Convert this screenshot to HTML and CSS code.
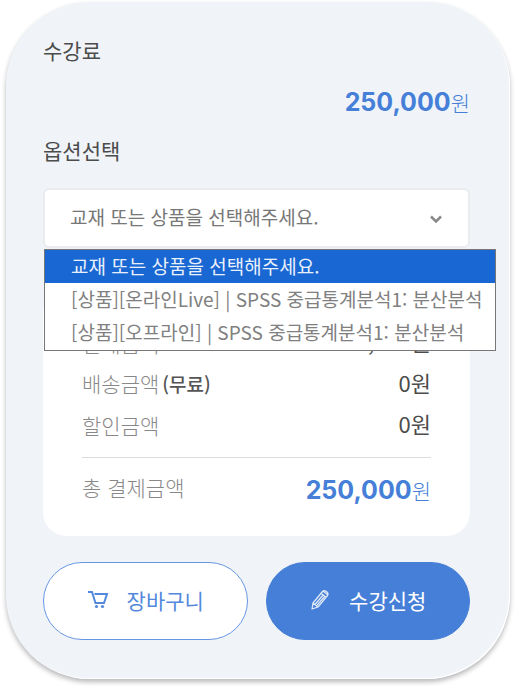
FILE: index.html
```html
<!DOCTYPE html>
<html lang="ko">
<head>
<meta charset="utf-8">
<meta name="viewport" content="width=device-width, initial-scale=1">
<title>수강료</title>
<link rel="stylesheet" href="styles.css">
</head>
<body>
<main class="card">
  <h2 class="heading">수강료</h2>
  <p class="price"><strong>250,000</strong><span>원</span></p>
  <h2 class="heading"><label for="product">옵션선택</label></h2>
  <div class="picker">
    <select id="product" class="picker-select">
      <option>교재 또는 상품을 선택해주세요.</option>
    </select>
    <svg class="picker-arrow" viewBox="0 0 14 10" aria-hidden="true"><path d="M2 2.5 7 7.5 12 2.5"/></svg>
    <ul class="menu" role="listbox">
      <li class="menu-item is-active" role="option" aria-selected="true">교재 또는 상품을 선택해주세요.</li>
      <li class="menu-item" role="option">[상품][온라인Live] | SPSS 중급통계분석1: 분산분석</li>
      <li class="menu-item" role="option">[상품][오프라인] | SPSS 중급통계분석1: 분산분석</li>
    </ul>
  </div>
  <section class="summary">
    <dl class="rows">
      <div class="row"><dt>판매금액</dt><dd>250,000원</dd></div>
      <div class="row"><dt>배송금액<b class="note">(무료)</b></dt><dd>0원</dd></div>
      <div class="row"><dt>할인금액</dt><dd>0원</dd></div>
      <div class="row total"><dt>총 결제금액</dt><dd class="price"><strong>250,000</strong><span>원</span></dd></div>
    </dl>
  </section>
  <div class="actions">
    <button type="button" class="button outline">
      <svg class="icon" viewBox="0 0 22 22" aria-hidden="true">
        <path d="M1 3h4l3.500 11h8.500L20 5H7.500" fill="none" stroke="currentColor" stroke-width="2"/>
        <circle cx="9.500" cy="17.500" r="1.600" fill="currentColor"/><circle cx="15.500" cy="17.500" r="1.600" fill="currentColor"/>
      </svg>
      장바구니
    </button>
    <button type="button" class="button filled">
      <svg class="icon" viewBox="0 0 22 22" aria-hidden="true">
        <path d="M3 20 4 14 13.500 2.500Q15 .800 17 2.200L18.500 3.500Q19.800 5 18.500 6.500L9 18ZM4 14l5 4M12 4.300l5 4M6 15.500 14.500 5.500M7.500 16.800 16 7M14 2l5 4" fill="none" stroke="currentColor" stroke-width="1.200" stroke-linejoin="round" opacity=".85"/>
      </svg>
      수강신청
    </button>
  </div>
</main>
</body>
</html>
```
FILE: styles.css
```css
* { box-sizing: border-box; }

body {
  margin: 0;
  padding: 2px 5px 10px 6px;
  background: #fff;
  color: #4c4c4c;
  font-family: "Noto Sans CJK KR", sans-serif;
  font-size: 21px;
  line-height: 30px;
}

.card {
  padding: 33px 40px 39px 37px;
  border-radius: 84px;
  background: #f0f4f9;
  box-shadow: inset -1px -1px 0 #fff, 0 3px 5px rgba(0, 0, 0, 0.28);
}

.heading { margin: 0; font-size: 21px; font-weight: 400; }

.price {
  margin: 0;
  color: #467fd8;
  text-align: right;
  font-weight: 300;
}
.card > .price { margin: 22px 0 18px; }
.price strong { font-family: Inter, sans-serif; font-size: 25px; font-weight: 700; }

.picker { position: relative; margin-top: 23px; }
.picker-select {
  display: block;
  width: 100%;
  height: 60px;
  padding: 0 48px 2px 25px;
  border: 2px solid #e9ebee;
  border-radius: 6px;
  background: #fff;
  color: #777;
  font: inherit;
  font-size: 19px;
  appearance: none;
}
.picker-arrow {
  position: absolute;
  top: 26px;
  right: 27px;
  width: 14px;
  height: 10px;
  fill: none;
  stroke: #888;
  stroke-width: 2.5;
}
.menu {
  position: absolute;
  top: 61px;
  left: 1px;
  right: -26px;
  margin: 0;
  padding: 0 0 1px;
  border: 1px solid #777;
  background: #fff;
  list-style: none;
}
.menu-item {
  padding: 0 0 2px 26px;
  color: #808080;
  font-size: 19px;
  line-height: 31px;
  white-space: nowrap;
}
.menu-item.is-active { background: #1967d2; color: #e8f0fc; }

.summary {
  margin-top: 41px;
  padding: 33px 39px 27px;
  border-radius: 24px;
  background: #fff;
}
.rows { margin: 0; }
.row {
  display: flex;
  justify-content: space-between;
  align-items: center;
  height: 41px;
}
.row dt { color: #888; font-weight: 300; }
.row dd { margin: 0; padding-bottom: 4px; font-size: 22px; }
.row .note { margin-left: 3px; color: #555; font-size: 19px; font-weight: 500; }
.total {
  height: 52px;
  margin-top: 12px;
  padding-top: 8px;
  border-top: 1px solid #ddd;
}
.total dt { padding-bottom: 2px; }
.total dd { padding: 4px 0 0; font-size: 21px; }

.actions { display: flex; gap: 18px; margin-top: 26px; }
.button {
  display: flex;
  flex: 1;
  align-items: center;
  justify-content: center;
  gap: 18px;
  height: 78px;
  padding: 0 6px 2px;
  border: 1px solid #6797e2;
  border-radius: 39px;
  font: inherit;
}
.outline { background: #fff; color: #5388dc; }
.filled { border-color: #467fd8; background: #467fd8; color: #fff; }
.icon { width: 22px; height: 22px; }
```
